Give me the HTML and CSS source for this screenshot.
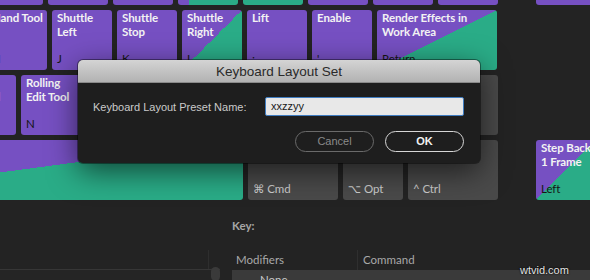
FILE: index.html
```html
<!DOCTYPE html>
<html>
<head>
<meta charset="utf-8">
<link rel="stylesheet" href="styles.css">
</head>
<body>
<div class="screen">
  <div class="keyboard">
    <div class="row row0">
      <div class="key purple"></div>
      <div class="key purple"></div>
      <div class="key purple"></div>
      <div class="key split-top"></div>
      <div class="key green"></div>
      <div class="key purple"></div>
      <div class="key purple"></div>
      <div class="key purple"></div>
      <div class="spacer"></div>
      <div class="key purple"></div>
    </div>
    <div class="row row1">
      <div class="key purple"><span class="name">Hand Tool</span><span class="code">H</span></div>
      <div class="key purple"><span class="name">Shuttle Left</span><span class="code">J</span></div>
      <div class="key purple"><span class="name">Shuttle Stop</span><span class="code">K</span></div>
      <div class="key split"><span class="name">Shuttle Right</span><span class="code">L</span></div>
      <div class="key purple"><span class="name">Lift</span><span class="code">;</span></div>
      <div class="key purple"><span class="name">Enable</span><span class="code">'</span></div>
      <div class="key split wide2"><span class="name">Render Effects in Work Area</span><span class="code">Return</span></div>
    </div>
    <div class="row row2">
      <div class="key purple tight"><span class="name">Ripple<br>Edit Tool</span><span class="code">B</span></div>
      <div class="key purple"><span class="name">Rolling Edit Tool</span><span class="code">N</span></div>
      <div class="key purple"></div>
      <div class="key purple"></div>
      <div class="key purple"></div>
      <div class="key purple"></div>
      <div class="key purple"></div>
      <div class="key gray shift"></div>
    </div>
    <div class="row row3">
      <div class="key split space"></div>
      <div class="key gray mod"><span class="name"></span><span class="code light">⌘ Cmd</span></div>
      <div class="key gray"><span class="name"></span><span class="code light">⌥ Opt</span></div>
      <div class="key gray mod"><span class="name"></span><span class="code light">^ Ctrl</span></div>
      <div class="spacer"></div>
      <div class="key split"><span class="name">Step Back 1 Frame</span><span class="code">Left</span></div>
    </div>
  </div>

  <div class="lower">
    <div class="list-pane">
      <div class="pane-head"></div>
      <div class="pane-body"><span class="thumb"></span></div>
    </div>
    <div class="detail">
      <div class="key-label">Key:</div>
      <div class="table-head"><span class="col-mod">Modifiers</span><span class="col-cmd">Command</span></div>
      <div class="table-row"><span class="col-none">None</span></div>
    </div>
  </div>

  <div class="dialog">
    <div class="titlebar">Keyboard Layout Set</div>
    <div class="dialog-body">
      <div class="field-row">
        <label class="field-label">Keyboard Layout Preset Name:</label>
        <div class="input">xxzzyy</div>
      </div>
      <div class="button-row">
        <div class="btn cancel">Cancel</div>
        <div class="btn ok">OK</div>
      </div>
    </div>
  </div>

  <div class="watermark">wtvid.com</div>
</div>
</body>
</html>
```
FILE: styles.css
```css
html, body {
  margin: 0;
  padding: 0;
  background: #232323;
}
.screen {
  position: relative;
  width: 590px;
  height: 280px;
  overflow: hidden;
  background: #232323;
  font-family: Lato, "Noto Sans", "DejaVu Sans", sans-serif;
}
.keyboard {
  display: flex;
  flex-direction: column;
  gap: 5px;
  margin-top: -55px;
}
.row {
  display: flex;
  gap: 5px;
}
.row0 { margin-left: -17px; }
.row1 { margin-left: -13px; }
.row2 { margin-left: -44px; }
.row3 { margin-left: -206px; }

.key {
  flex: none;
  box-sizing: border-box;
  width: 60px;
  height: 60px;
  border-radius: 3px;
  padding: 1px 4px 4px 5px;
  display: flex;
  flex-direction: column;
  justify-content: space-between;
  font-size: 11.5px;
  line-height: 14px;
  color: #f3f3f3;
  font-weight: 700;
  letter-spacing: -0.1px;
}
.key.tight { padding-left: 1px; }
.key .name { display: block; }
.key .code {
  color: #151515;
  font-weight: 400;
}
.key .code.light {
  color: #cdcdcd;
  font-family: Lato, "DejaVu Sans", sans-serif;
}
.purple { background: #7650c2; }
.green { background: #2aac87; }
.gray { background: #4a4a4a; }
.split { background: linear-gradient(to bottom right, #7650c2 50%, #2aac87 50%); }
.split-top { background: linear-gradient(100deg, #7650c2 30%, #2aac87 30%); }
.wide2 { width: 120px; }
.shift { width: 87px; }
.space { width: 449px; }
.mod { width: 90px; }
.spacer { flex: none; width: 28px; }

/* lower pane */
.lower {
  display: grid;
  grid-template-columns: 220px 1fr;
  column-gap: 12px;
  height: 80px;
}
.list-pane {
  display: flex;
  flex-direction: column;
}
.pane-head {
  margin-top: 50px;
  width: 208px;
  height: 19px;
  border-right: 1px solid #2e2e2e;
}
.pane-body {
  width: 220px;
  flex: 1;
  border-top: 1px solid #363636;
  background: #252525;
  display: flex;
  justify-content: flex-end;
}
.thumb {
  width: 9px;
  height: 14px;
  margin-top: -3px;
  border-radius: 5px;
  background: #3a3a3a;
}
.detail {
  display: flex;
  flex-direction: column;
  font-size: 11.5px;
  line-height: 14px;
  color: #a9a9a9;
}
.key-label {
  margin-top: 19px;
  font-weight: 700;
  color: #a6a6a6;
}
.table-head {
  margin-top: 17px;
  height: 20px;
  display: flex;
  align-items: center;
}
.col-mod {
  box-sizing: border-box;
  width: 125px;
  padding-left: 4px;
}
.col-cmd {
  padding-left: 5px;
  border-left: 1px solid #2f2f2f;
  line-height: 20px;
}
.table-row {
  height: 20px;
  background: #3a3a3a;
  color: #c8c8c8;
}
.col-none {
  display: block;
  padding-left: 28px;
  line-height: 16px;
  padding-top: 2px;
}

/* dialog */
.dialog {
  position: absolute;
  left: 78px;
  top: 60px;
  width: 402px;
  height: 103px;
  border-radius: 5px;
  background: #1e1e1e;
  box-shadow: 0 8px 30px rgba(0, 0, 0, 0.6), 0 0 0 1px rgba(0, 0, 0, 0.4);
  overflow: hidden;
  font-family: "Liberation Sans", Arial, sans-serif;
  display: flex;
  flex-direction: column;
}
.titlebar {
  height: 23px;
  line-height: 23px;
  text-align: center;
  font-size: 13.5px;
  color: #2a2a2a;
  background: linear-gradient(#d4d4d4, #b2b2b2);
  border-bottom: 1px solid #8a8a8a;
  box-sizing: border-box;
}
.dialog-body {
  padding: 14px 16px 0 15px;
  display: flex;
  flex-direction: column;
}
.field-row {
  display: flex;
  align-items: center;
  justify-content: space-between;
}
.field-label {
  font-size: 11px;
  color: #cacaca;
}
.input {
  box-sizing: border-box;
  width: 199px;
  height: 19px;
  padding-left: 5px;
  background: #e8e8e8;
  border: 1px solid #3f7cc0;
  border-radius: 2px;
  font-size: 11px;
  line-height: 17px;
  color: #1a1a1a;
}
.button-row {
  margin-top: 15px;
  display: flex;
  justify-content: flex-end;
  gap: 11px;
}
.btn {
  box-sizing: border-box;
  width: 79px;
  height: 21px;
  border-radius: 11px;
  text-align: center;
  font-size: 11px;
  line-height: 19px;
}
.cancel {
  border: 1px solid #6a6a6a;
  color: #8a8a8a;
}
.ok {
  border: 1.5px solid #d6d6d6;
  color: #f2f2f2;
  font-weight: 700;
  line-height: 18px;
}

.watermark {
  position: absolute;
  left: 520px;
  top: 264px;
  font-family: "Liberation Sans", Arial, sans-serif;
  font-size: 11px;
  color: #e6e6e6;
  text-shadow: 0 0 2px #000, 0 0 1px #000;
}
```
